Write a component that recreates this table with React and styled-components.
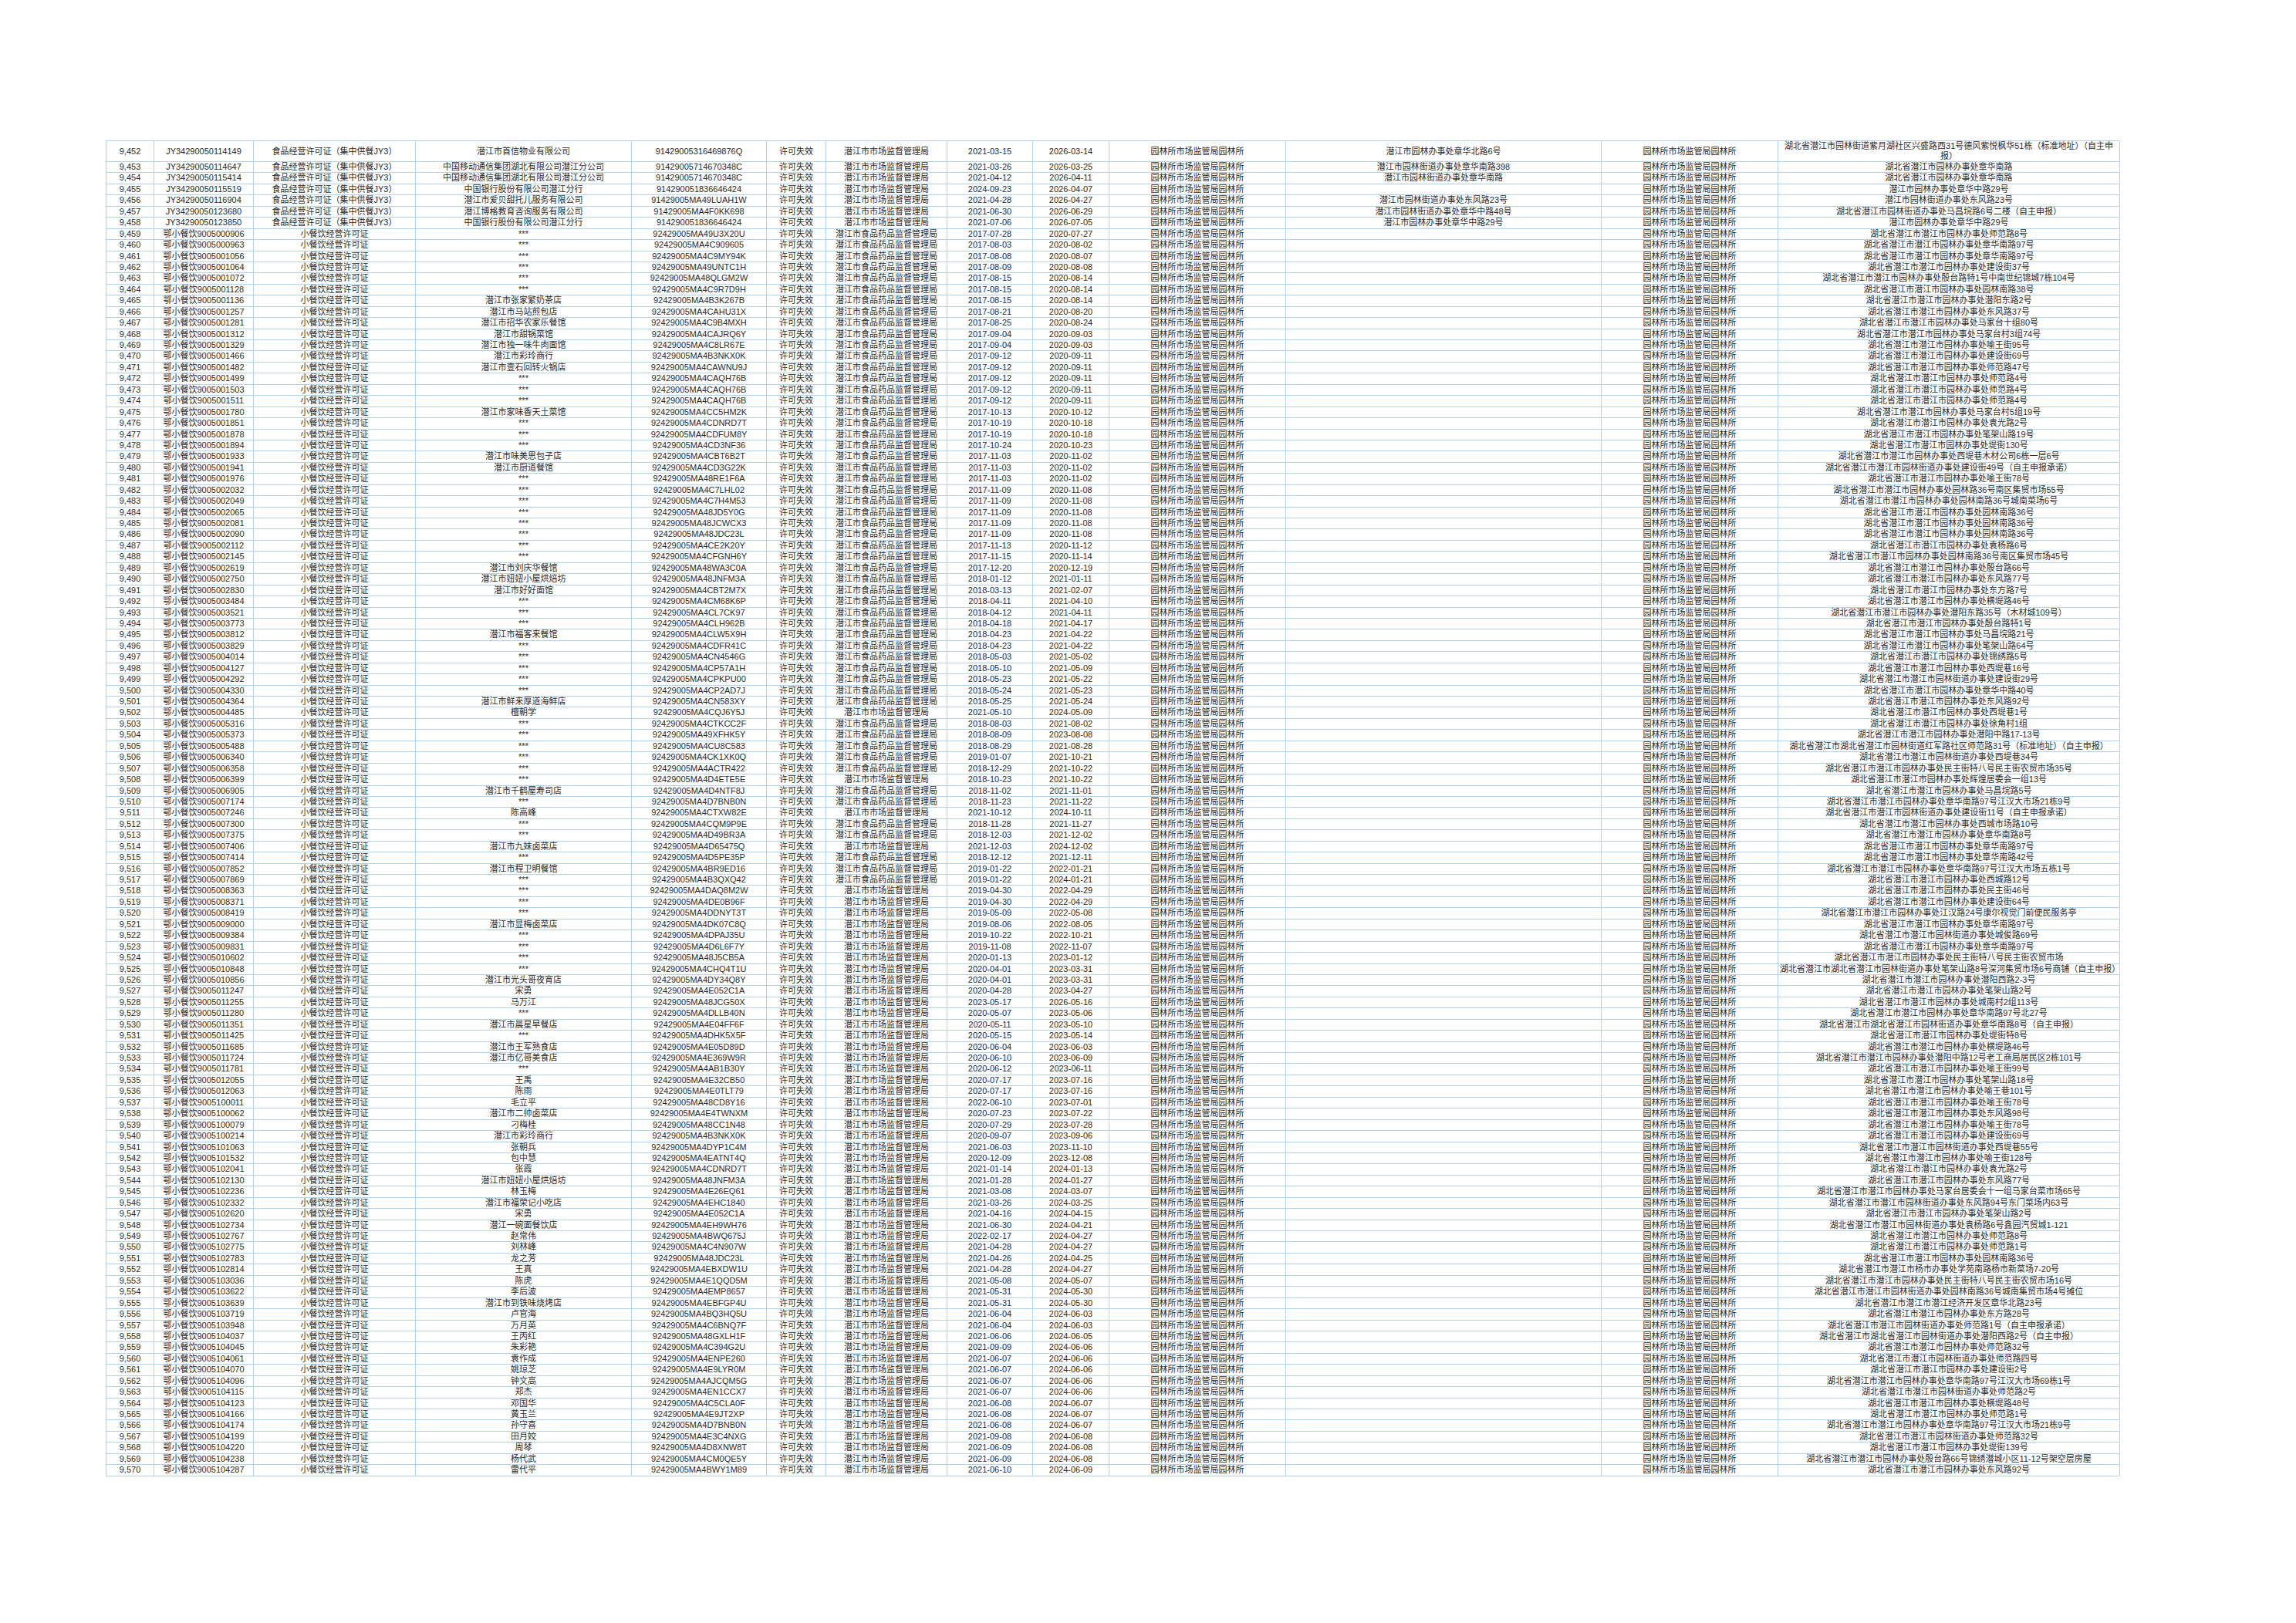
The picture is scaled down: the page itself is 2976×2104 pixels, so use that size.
import React from 'react'
import styled, { createGlobalStyle } from 'styled-components'

const GlobalStyle = createGlobalStyle`
  html, body {
    margin: 0;
    padding: 0;
    background: #ffffff;
  }
  body {
    font-family: "Liberation Sans", "Noto Sans CJK SC", sans-serif;
  }
`

const Page = styled.div`
  width: 2976px;
  min-height: 2104px;
  padding: 182px 0 0 137px;
  box-sizing: border-box;
`

const Sheet = styled.table`
  border-collapse: collapse;
  table-layout: fixed;
  width: 2610px;
  color: #2b2b2b;
  font-size: 11px;
`

const Col = styled.col`
  width: ${p => p.$w}px;
`

const Cell = styled.td`
  border: 1px solid #b2d3ee;
  padding: 0 2px;
  text-align: center;
  vertical-align: middle;
  overflow: hidden;
`

const Text = styled.div`
  height: ${p => (p.$tall ? 26 : 13.44)}px;
  line-height: ${p => (p.$tall ? 13 : 13.44)}px;
  overflow: hidden;
  word-break: break-all;
  display: ${p => (p.$tall ? 'flex' : 'block')};
  align-items: center;
  justify-content: center;
`

const WIDTHS = [62, 129, 210, 280, 175, 77, 157, 111, 99, 229, 409, 229, 443]

const SCJG = '潜江市市场监督管理局'
const SYJ = '潜江市食品药品监督管理局'
const GARDEN = '园林所市场监管局园林所'
const P = '湖北省潜江市潜江市园林办事处'
const J = '湖北省潜江市潜江市园林街道办事处'

const groupRows = [
  ['JY34290050114149', '潜江市首信物业有限公司', '91429005316469876Q', '2021-03-15', '2026-03-14', '潜江市园林办事处章华北路6号', '湖北省潜江市园林街道紫月湖社区兴盛路西31号德风紫悦枫华51栋（标准地址）（自主申报）'],
  ['JY34290050114647', '中国移动通信集团湖北有限公司潜江分公司', '91429005714670348C', '2021-03-26', '2026-03-25', '潜江市园林街道办事处章华南路398', '湖北省潜江市园林办事处章华南路'],
  ['JY34290050115414', '中国移动通信集团湖北有限公司潜江分公司', '91429005714670348C', '2021-04-12', '2026-04-11', '潜江市园林街道办事处章华南路', '湖北省潜江市园林办事处章华南路'],
  ['JY34290050115519', '中国银行股份有限公司潜江分行', '914290051836646424', '2024-09-23', '2026-04-07', '', '潜江市园林办事处章华中路29号'],
  ['JY34290050116904', '潜江市爱贝甜托儿服务有限公司', '91429005MA49LUAH1W', '2021-04-28', '2026-04-27', '潜江市园林街道办事处东风路23号', '潜江市园林街道办事处东风路23号'],
  ['JY34290050123680', '潜江博格教育咨询服务有限公司', '91429005MA4F0KK698', '2021-06-30', '2026-06-29', '潜江市园林街道办事处章华中路48号', '湖北省潜江市园林街道办事处马昌垸路6号二楼（自主申报）'],
  ['JY34290050123850', '中国银行股份有限公司潜江分行', '914290051836646424', '2021-07-06', '2026-07-05', '潜江市园林办事处章华中路29号', '潜江市园林办事处章华中路29号'],
]

// license suffix | name (* = ***) | credit code | F = 食药局, S = 市场局 | start | end | address (~ / ^ are prefixes)
const smallRows = `
000906|*|92429005MA49U3X20U|F|2017-07-28|2020-07-27|~师范路8号
000963|*|92429005MA4C909605|F|2017-08-03|2020-08-02|~章华南路97号
001056|*|92429005MA4C9MY94K|F|2017-08-08|2020-08-07|~章华南路97号
001064|*|92429005MA49UNTC1H|F|2017-08-09|2020-08-08|~建设街37号
001072|*|92429005MA48QLGM2W|F|2017-08-15|2020-08-14|~殷台路特1号中南世纪锦城7栋104号
001128|*|92429005MA4C9R7D9H|F|2017-08-15|2020-08-14|~园林南路38号
001136|潜江市张家繁奶茶店|92429005MA4B3K267B|F|2017-08-15|2020-08-14|~潜阳东路2号
001257|潜江市马站煎包店|92429005MA4CAHU31X|F|2017-08-21|2020-08-20|~东风路37号
001281|潜江市招华农家乐餐馆|92429005MA4C9B4MXH|F|2017-08-25|2020-08-24|~马家台十组80号
001312|潜江市甜锅菜馆|92429005MA4CAJRQ6Y|F|2017-09-04|2020-09-03|~马家台村3组74号
001329|潜江市独一味牛肉面馆|92429005MA4C8LR67E|F|2017-09-04|2020-09-03|~喻王街95号
001466|潜江市彩玲商行|92429005MA4B3NKX0K|F|2017-09-12|2020-09-11|~建设街69号
001482|潜江市壹石回转火锅店|92429005MA4CAWNU9J|F|2017-09-12|2020-09-11|~师范路47号
001499|*|92429005MA4CAQH76B|F|2017-09-12|2020-09-11|~师范路4号
001503|*|92429005MA4CAQH76B|F|2017-09-12|2020-09-11|~师范路4号
001511|*|92429005MA4CAQH76B|F|2017-09-12|2020-09-11|~师范路4号
001780|潜江市家味香天土菜馆|92429005MA4CC5HM2K|F|2017-10-13|2020-10-12|~马家台村5组19号
001851|*|92429005MA4CDNRD7T|F|2017-10-19|2020-10-18|~袁光路2号
001878|*|92429005MA4CDFUM8Y|F|2017-10-19|2020-10-18|~笔架山路19号
001894|*|92429005MA4CD3NF36|F|2017-10-24|2020-10-23|~堤街130号
001933|潜江市味美思包子店|92429005MA4CBT6B2T|F|2017-11-03|2020-11-02|~西堤巷木材公司6栋一层6号
001941|潜江市厨道餐馆|92429005MA4CD3G22K|F|2017-11-03|2020-11-02|^建设街49号（自主申报承诺）
001976|*|92429005MA48RE1F6A|F|2017-11-03|2020-11-02|~喻王街78号
002032|*|92429005MA4C7LHL02|F|2017-11-09|2020-11-08|~园林路36号南区集贸市场55号
002049|*|92429005MA4C7H4M53|F|2017-11-09|2020-11-08|~园林南路36号城南菜场6号
002065|*|92429005MA48JD5Y0G|F|2017-11-09|2020-11-08|~园林南路36号
002081|*|92429005MA48JCWCX3|F|2017-11-09|2020-11-08|~园林南路36号
002090|*|92429005MA48JDC23L|F|2017-11-09|2020-11-08|~园林南路36号
002112|*|92429005MA4CE2K20Y|F|2017-11-13|2020-11-12|~袁杨路6号
002145|*|92429005MA4CFGNH6Y|F|2017-11-15|2020-11-14|~园林南路36号南区集贸市场45号
002619|潜江市刘庆华餐馆|92429005MA48WA3C0A|F|2017-12-20|2020-12-19|~殷台路66号
002750|潜江市妞妞小屋烘焙坊|92429005MA48JNFM3A|F|2018-01-12|2021-01-11|~东风路77号
002830|潜江市好好面馆|92429005MA4CBT2M7X|F|2018-03-13|2021-02-07|~东方路7号
003484|*|92429005MA4CM68K6P|F|2018-04-11|2021-04-10|~横堤路46号
003521|*|92429005MA4CL7CK97|F|2018-04-12|2021-04-11|~潜阳东路35号（木材城109号）
003773|*|92429005MA4CLH962B|F|2018-04-18|2021-04-17|~殷台路特1号
003812|潜江市福客来餐馆|92429005MA4CLW5X9H|F|2018-04-23|2021-04-22|~马昌垸路21号
003829|*|92429005MA4CDFR41C|F|2018-04-23|2021-04-22|~笔架山路64号
004014|*|92429005MA4CN4546G|F|2018-05-03|2021-05-02|~锦绣路5号
004127|*|92429005MA4CP57A1H|F|2018-05-10|2021-05-09|~西堤巷16号
004292|*|92429005MA4CPKPU00|F|2018-05-23|2021-05-22|^建设街29号
004330|*|92429005MA4CP2AD7J|F|2018-05-24|2021-05-23|~章华中路40号
004364|潜江市鲜来厚道海鲜店|92429005MA4CN583XY|F|2018-05-25|2021-05-24|~东风路92号
004485|檀朝学|92429005MA4CQJ6Y5J|S|2021-05-10|2024-05-09|~西堤巷1号
005316|*|92429005MA4CTKCC2F|F|2018-08-03|2021-08-02|~徐角村1组
005373|*|92429005MA49XFHK5Y|F|2018-08-09|2023-08-08|~潜阳中路17-13号
005488|*|92429005MA4CU8C583|F|2018-08-29|2021-08-28|湖北省潜江市湖北省潜江市园林街道红军路社区师范路31号（标准地址）（自主申报）
006340|*|92429005MA4CK1XK0Q|F|2019-01-07|2021-10-21|^西堤巷34号
006358|*|92429005MA4ACTR422|F|2018-12-29|2021-10-22|~民主街特八号民主街农贸市场35号
006399|*|92429005MA4D4ETE5E|S|2018-10-23|2021-10-22|~辉煌居委会一组13号
006905|潜江市千鹤屋寿司店|92429005MA4D4NTF8J|F|2018-11-02|2021-11-01|~马昌垸路5号
007174|*|92429005MA4D7BNB0N|F|2018-11-23|2021-11-22|~章华南路97号江汉大市场21栋9号
007246|陈高峰|92429005MA4CTXW82E|S|2021-10-12|2024-10-11|^建设街11号（自主申报承诺）
007300|*|92429005MA4CQM9P9E|F|2018-11-28|2021-11-27|~西城市场路10号
007375|*|92429005MA4D49BR3A|F|2018-12-03|2021-12-02|~章华南路8号
007406|潜江市九妹卤菜店|92429005MA4D65475Q|S|2021-12-03|2024-12-02|~章华南路97号
007414|*|92429005MA4D5PE35P|F|2018-12-12|2021-12-11|~章华南路42号
007852|潜江市程卫明餐馆|92429005MA4BR9ED16|F|2019-01-22|2022-01-21|~章华南路97号江汉大市场五栋1号
007869|*|92429005MA4B3QXQ42|F|2019-01-22|2024-01-21|~西城路12号
008363|*|92429005MA4DAQ8M2W|S|2019-04-30|2022-04-29|~民主街46号
008371|*|92429005MA4DE0B96F|S|2019-04-30|2022-04-29|~建设街64号
008419|*|92429005MA4DDNYT3T|S|2019-05-09|2022-05-08|~江汉路24号康尔视觉门前便民服务亭
009000|潜江市显梅卤菜店|92429005MA4DK07C8Q|S|2019-08-06|2022-08-05|~章华南路97号
009384|*|92429005MA4DPAJ35U|S|2019-10-22|2022-10-21|^城俊路69号
009831|*|92429005MA4D6L6F7Y|S|2019-11-08|2022-11-07|~章华南路97号
010602|*|92429005MA48J5CB5A|S|2020-01-13|2023-01-12|~民主街特八号民主街农贸市场
010848|*|92429005MA4CHQ4T1U|S|2020-04-01|2023-03-31|湖北省潜江市湖北省潜江市园林街道办事处笔架山路8号深河集贸市场6号商铺（自主申报）
010856|潜江市光头哥夜宵店|92429005MA4DY34Q8Y|S|2020-04-01|2023-03-31|~潜阳西路2-3号
011247|宋勇|92429005MA4E052C1A|S|2020-04-28|2023-04-27|~笔架山路2号
011255|马万江|92429005MA48JCG50X|S|2023-05-17|2026-05-16|~城南村2组113号
011280|*|92429005MA4DLLB40N|S|2020-05-07|2023-05-06|~章华南路97号北27号
011351|潜江市晨星早餐店|92429005MA4E04FF6F|S|2020-05-11|2023-05-10|湖北省潜江市湖北省潜江市园林街道办事处章华南路8号（自主申报）
011425|*|92429005MA4DHK5X5F|S|2020-05-15|2023-05-14|~堤街特8号
011685|潜江市王军熟食店|92429005MA4E05D89D|S|2020-06-04|2023-06-03|~横堤路46号
011724|潜江市亿哥美食店|92429005MA4E369W9R|S|2020-06-10|2023-06-09|~潜阳中路12号老工商局居民区2栋101号
011781|*|92429005MA4AB1B30Y|S|2020-06-12|2023-06-11|~喻王街99号
012055|王禹|92429005MA4E32CB50|S|2020-07-17|2023-07-16|~笔架山路18号
012063|陈雨|92429005MA4E0TLT79|S|2020-07-17|2023-07-16|~喻王巷101号
100011|毛立平|92429005MA48CD8Y16|S|2022-06-10|2023-07-01|~喻王街78号
100062|潜江市二帅卤菜店|92429005MA4E4TWNXM|S|2020-07-23|2023-07-22|~东风路98号
100079|刁梅桂|92429005MA48CC1N48|S|2020-07-29|2023-07-28|~喻王街78号
100214|潜江市彩玲商行|92429005MA4B3NKX0K|S|2020-09-07|2023-09-06|~建设街69号
101063|张朝兵|92429005MA4DYP1C4M|S|2021-06-03|2023-11-10|^西堤巷55号
101532|包中慧|92429005MA4EATNT4Q|S|2020-12-09|2023-12-08|~喻王街128号
102041|张霞|92429005MA4CDNRD7T|S|2021-01-14|2024-01-13|~袁光路2号
102130|潜江市妞妞小屋烘焙坊|92429005MA48JNFM3A|S|2021-01-28|2024-01-27|~东风路77号
102236|林玉梅|92429005MA4E26EQ61|S|2021-03-08|2024-03-07|~马家台居委会十一组马家台菜市场65号
102332|潜江市福荣记小吃店|92429005MA4EHC1840|S|2021-03-26|2024-03-25|^东风路94号东门菜场内63号
102620|宋勇|92429005MA4E052C1A|S|2021-04-16|2024-04-15|~笔架山路2号
102734|潜江一碗面餐饮店|92429005MA4EH9WH76|S|2021-06-30|2024-04-21|^袁杨路6号鑫园汽贸城1-121
102767|赵常伟|92429005MA4BWQ675J|S|2022-02-17|2024-04-27|~师范路8号
102775|刘林峰|92429005MA4C4N907W|S|2021-04-28|2024-04-27|~师范路1号
102783|龙之芳|92429005MA48JDC23L|S|2021-04-26|2024-04-25|~园林南路36号
102814|王真|92429005MA4EBXDW1U|S|2021-04-28|2024-04-27|湖北省潜江市潜江市杨市办事处学苑南路杨市新菜场7-20号
103036|陈虎|92429005MA4E1QQD5M|S|2021-05-08|2024-05-07|~民主街特八号民主街农贸市场16号
103622|李后波|92429005MA4EMP8657|S|2021-05-31|2024-05-30|^园林南路36号城南集贸市场4号摊位
103639|潜江市到铁味烧烤店|92429005MA4EBFGP4U|S|2021-05-31|2024-05-30|湖北省潜江市潜江市潜江经济开发区章华北路23号
103719|卢官海|92429005MA4BQ3HQ5U|S|2021-06-04|2024-06-03|~东方路28号
103948|万月英|92429005MA4C6BNQ7F|S|2021-06-04|2024-06-03|^师范路1号（自主申报承诺）
104037|王丙红|92429005MA48GXLH1F|S|2021-06-06|2024-06-05|湖北省潜江市湖北省潜江市园林街道办事处潜阳西路2号（自主申报）
104045|朱彩艳|92429005MA4C394G2U|S|2021-09-09|2024-06-06|~师范路32号
104061|袁作成|92429005MA4ENPE260|S|2021-06-07|2024-06-06|^师范路四号
104070|姚琼芝|92429005MA4E9LYR0M|S|2021-06-07|2024-06-06|~建设街2号
104096|钟文高|92429005MA4AJCQM5G|S|2021-06-07|2024-06-06|~章华南路97号江汉大市场69栋1号
104115|郑杰|92429005MA4EN1CCX7|S|2021-06-07|2024-06-06|^师范路2号
104123|邓国华|92429005MA4C5CLA0F|S|2021-06-08|2024-06-07|~横堤路48号
104166|黄玉兰|92429005MA4E9JT2XP|S|2021-06-08|2024-06-07|~师范路1号
104174|孙守喜|92429005MA4D7BNB0N|S|2021-06-08|2024-06-07|~章华南路97号江汉大市场21栋9号
104199|田月姣|92429005MA4E3C4NXG|S|2021-09-08|2024-06-08|^师范路32号
104220|周琴|92429005MA4D8XNW8T|S|2021-06-09|2024-06-08|~堤街139号
104238|杨代武|92429005MA4CM0QE5Y|S|2021-06-09|2024-06-08|~殷台路66号锦绣潜城小区11-12号架空层房屋
104287|雷代平|92429005MA4BWY1M89|S|2021-06-10|2024-06-09|~东风路92号
`

const expandAddress = a => a.replace(/^~/, P).replace(/^\^/, J)

const rows = [
  ...groupRows.map(([lic, name, code, start, end, addr, addr2]) => [
    lic, '食品经营许可证（集中供餐JY3）', name, code, '许可失效', SCJG, start, end, GARDEN, addr, GARDEN, addr2,
  ]),
  ...smallRows.trim().split('\n').map(line => {
    const [num, name, code, auth, start, end, addr] = line.split('|')
    return [
      '鄂小餐饮9005' + num, '小餐饮经营许可证', name === '*' ? '***' : name, code, '许可失效',
      auth === 'F' ? SYJ : SCJG, start, end, GARDEN, '', GARDEN, expandAddress(addr),
    ]
  }),
]

const formatSeq = n => n.toLocaleString('en-US')

const App = () => {
  return (
    <Page>
      <GlobalStyle />
      <Sheet>
        <colgroup>
          {WIDTHS.map((w, i) => <Col key={i} $w={w} />)}
        </colgroup>
        <tbody>
          {rows.map((cells, i) => (
            <tr key={i}>
              {[formatSeq(9452 + i), ...cells].map((value, j) => (
                <Cell key={j}>
                  <Text $tall={i === 0}>{value}</Text>
                </Cell>
              ))}
            </tr>
          ))}
        </tbody>
      </Sheet>
    </Page>
  )
}

export default App
